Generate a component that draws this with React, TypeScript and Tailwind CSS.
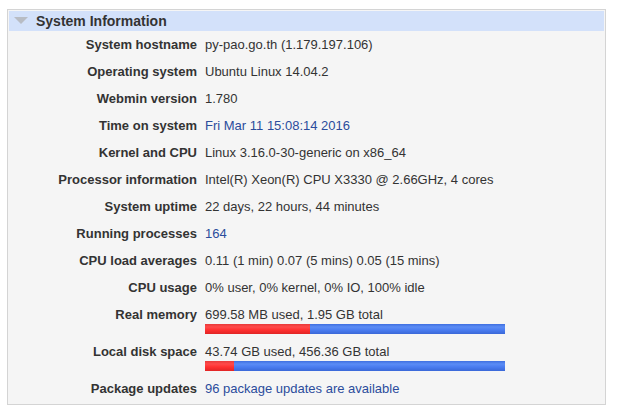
import React from 'react'

type Row = {
  label: string
  value: string
  link?: boolean
  bar?: number
}

const rows: Row[] = [
  { label: 'System hostname', value: 'py-pao.go.th (1.179.197.106)' },
  { label: 'Operating system', value: 'Ubuntu Linux 14.04.2' },
  { label: 'Webmin version', value: '1.780' },
  { label: 'Time on system', value: 'Fri Mar 11 15:08:14 2016', link: true },
  { label: 'Kernel and CPU', value: 'Linux 3.16.0-30-generic on x86_64' },
  { label: 'Processor information', value: 'Intel(R) Xeon(R) CPU X3330 @ 2.66GHz, 4 cores' },
  { label: 'System uptime', value: '22 days, 22 hours, 44 minutes' },
  { label: 'Running processes', value: '164', link: true },
  { label: 'CPU load averages', value: '0.11 (1 min) 0.07 (5 mins) 0.05 (15 mins)' },
  { label: 'CPU usage', value: '0% user, 0% kernel, 0% IO, 100% idle' },
  { label: 'Real memory', value: '699.58 MB used, 1.95 GB total', bar: 105 },
  { label: 'Local disk space', value: '43.74 GB used, 456.36 GB total', bar: 29 },
  { label: 'Package updates', value: '96 package updates are available', link: true },
]

function UsageBar({ used }: { used: number }) {
  return (
    <div className="mt-[2px] flex h-[10px] w-[300px]">
      <div
        className="h-full bg-[linear-gradient(to_bottom,#e83a3a_0%,#ff4a4a_30%,#ff3030_60%,#e02525_100%)]"
        style={{ width: used }}
      />
      <div className="h-full flex-1 bg-[linear-gradient(to_bottom,#3f6fe0_0%,#5b8cf5_30%,#4a7cf0_60%,#3a68d8_100%)]" />
    </div>
  )
}

export default function App() {
  return (
    <div
      className="h-[411px] w-[619px] bg-white pl-[7px] pt-[9px] text-[13px] text-[#333]"
      style={{ fontFamily: '"Liberation Sans", Arial, sans-serif' }}
    >
      <div className="w-[599px] border border-[#d4d4d4] bg-[#f5f5f5] p-px pb-[2px]">
        <div className="flex h-[20px] items-center gap-[8px] bg-[#d3e1fa] pl-[5px]">
          <svg width="14" height="8" viewBox="0 0 14 8">
            <polygon points="0,0 14,0 7,7" fill="#b8bcc4" />
          </svg>
          <span className="text-[14px] font-bold leading-none text-[#333]">System Information</span>
        </div>
        <div className="flex flex-col">
          {rows.map((r) => (
            <div key={r.label} className={`flex ${r.bar !== undefined ? 'pb-[4px] pt-[6px]' : 'py-[6px]'}`}>
              <div className="w-[188px] shrink-0 text-right font-bold leading-[15px]">{r.label}</div>
              <div className="pl-[8px]">
                <div className={`leading-[15px] ${r.link ? 'text-[#2b4c9c]' : ''}`}>{r.value}</div>
                {r.bar !== undefined && <UsageBar used={r.bar} />}
              </div>
            </div>
          ))}
        </div>
      </div>
    </div>
  )
}
